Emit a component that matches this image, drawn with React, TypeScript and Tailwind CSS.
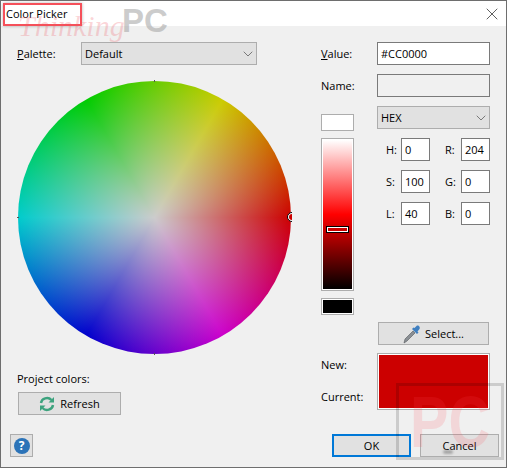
import { X, ChevronDown } from "lucide-react";

const font = "font-['Open_Sans','Liberation_Sans',sans-serif]";

function Select({ value }: { value: string }) {
  return (
    <div className="flex h-[23px] items-center justify-between border border-[#adadad] bg-[#e1e1e1] pl-[3px]">
      <span>{value}</span>
      <ChevronDown size={16} strokeWidth={1} className="text-[#444]" />
    </div>
  );
}

function Field({ label, value }: { label: string; value: string }) {
  return (
    <>
      <span>{label}</span>
      <div className="flex h-[23px] items-center border border-[#7a7a7a] bg-white pl-[3px]">{value}</div>
    </>
  );
}

function Dropper() {
  return (
    <svg width="18" height="20" viewBox="0 0 18 20">
      <path d="M1 19 L2 15 L10 7 L12 9 L4 17 Z" fill="#8a8f94" stroke="#55595c" strokeWidth="0.6" />
      <path d="M9 5 L14 10 L15.5 8.5 L14.5 7.5 L16.5 5 C17.5 3.5 16 1 14 1.5 L11.5 4 L10.5 3.5 Z" fill="#3f7fc0" />
    </svg>
  );
}

function Refresh() {
  return (
    <svg width="16" height="16" viewBox="0 0 16 16" fill="none" stroke="#3da37e" strokeWidth="2.4">
      <path d="M2 7 A6 5.5 0 0 1 12.5 4" />
      <path d="M14 9 A6 5.5 0 0 1 3.5 12" />
      <path d="M15 1 V6.5 H9.5 Z" fill="#3da37e" stroke="none" />
      <path d="M1 15 V9.5 H6.5 Z" fill="#3da37e" stroke="none" />
    </svg>
  );
}

export default function App() {
  return (
    <div className={`${font} relative flex h-[468px] w-[507px] flex-col overflow-hidden border border-[#6e6e6e] bg-[#f0f0f0] text-[11px] leading-4 text-black`}>
      {/* Title bar */}
      <div className="flex h-[25px] shrink-0 items-center justify-between bg-white pl-[5px] pr-[4px]">
        <span>Color Picker</span>
        <X size={20} strokeWidth={0.75} />
      </div>

      <div className="flex flex-1 pl-[16px] pt-[16px]">
        {/* Left column */}
        <div className="flex w-[304px] shrink-0 flex-col items-start">
          <div className="flex w-[240px] items-center">
            <span className="w-[64px] shrink-0"><span className="underline">P</span>alette:</span>
            <div className="flex-1"><Select value="Default" /></div>
          </div>

          <div className="relative ml-px mt-[16px] size-[273px] rounded-full bg-[image:radial-gradient(circle_closest-side,#cccccc,#cccccc00),conic-gradient(from_90deg,#cc0000,#cc00cc,#0000cc,#00cccc,#00cc00,#cccc00,#cc0000)]">
            <div className="absolute left-[136px] top-[-1px] h-[2px] w-px bg-[#555]" />
            <div className="absolute bottom-[-1px] left-[136px] h-[2px] w-px bg-[#555]" />
            <div className="absolute left-[-1px] top-[136px] h-px w-[2px] bg-[#555]" />
            <div className="absolute right-[-1px] top-[131px] h-[10px] w-[5px] overflow-hidden">
              <div className="size-[10px] rounded-full border border-black bg-white p-px">
                <div className="size-full rounded-full bg-[#cc0000]" />
              </div>
            </div>
          </div>

          <div className="mt-[17px]">Project colors:</div>
          <div className="ml-px mt-[5px] flex h-[23px] w-[103px] items-center justify-center gap-[5px] border border-[#adadad] bg-[#e1e1e1]">
            <Refresh />
            <span>Refresh</span>
          </div>
          <div className="ml-[-7px] mt-[19px] flex size-[23px] items-center justify-center border border-[#adadad] bg-[#e1e1e1]">
            <div className="flex size-[16px] items-center justify-center rounded-full bg-[#2b73b8] text-[12px] font-bold text-white">?</div>
          </div>
        </div>

        {/* Right column */}
        <div className="flex w-[178px] shrink-0 flex-col items-start">
          <div className="flex w-[169px] items-center">
            <span className="w-[56px] shrink-0"><span className="underline">V</span>alue:</span>
            <div className="flex h-[23px] flex-1 items-center border border-[#7a7a7a] bg-white pl-[3px]">#CC0000</div>
          </div>
          <div className="mt-[9px] flex w-[169px] items-center">
            <span className="w-[56px] shrink-0">Name:</span>
            <div className="h-[23px] flex-1 border border-[#7a7a7a] bg-[#f0f0f0]" />
          </div>

          <div className="mt-[9px] flex w-[169px]">
            <div className="flex w-[33px] shrink-0 flex-col pt-[8px]">
              <div className="h-[17px] border border-[#adadad] bg-white" />
              <div className="relative mt-[7px] h-[153px] border border-[#adadad] bg-white p-px">
                <div className="h-full bg-[linear-gradient(to_bottom,#ffffff,#ff0000_50%,#000000)]" />
                <div className="absolute left-[4px] top-[87px] h-[7px] w-[23px] border border-black bg-[#cc0000] outline outline-1 -outline-offset-2 outline-white" />
              </div>
              <div className="mt-[7px] h-[17px] border border-[#adadad] bg-white p-px">
                <div className="size-full bg-black" />
              </div>
            </div>
            <div className="ml-[23px] flex-1">
              <Select value="HEX" />
              <div className="mt-[9px] grid grid-cols-[15px_29px_31px_29px] items-center gap-y-[9px] pl-[9px]">
                <Field label="H:" value="0" />
                <div className="contents">
                  <span className="pl-[15px]">R:</span>
                  <div className="flex h-[23px] items-center border border-[#7a7a7a] bg-white pl-[3px]">204</div>
                </div>
                <Field label="S:" value="100" />
                <div className="contents">
                  <span className="pl-[15px]">G:</span>
                  <div className="flex h-[23px] items-center border border-[#7a7a7a] bg-white pl-[3px]">0</div>
                </div>
                <Field label="L:" value="40" />
                <div className="contents">
                  <span className="pl-[15px]">B:</span>
                  <div className="flex h-[23px] items-center border border-[#7a7a7a] bg-white pl-[3px]">0</div>
                </div>
              </div>
            </div>
          </div>

          <div className="ml-[57px] mt-[7px] flex h-[23px] w-[111px] items-center justify-center gap-[4px] border border-[#adadad] bg-[#e1e1e1]">
            <Dropper />
            <span>Select...</span>
          </div>

          <div className="mt-[8px] flex w-[169px]">
            <div className="flex w-[56px] shrink-0 flex-col gap-[16px] pt-[4px]">
              <span>New:</span>
              <span>Current:</span>
            </div>
            <div className="h-[57px] flex-1 border border-[#adadad] bg-white p-px">
              <div className="size-full bg-[#cc0000]" />
            </div>
          </div>

          <div className="ml-[11px] mt-[24px] flex gap-[9px]">
            <div className="flex h-[23px] w-[79px] items-center justify-center border-2 border-[#0078d7] bg-[#e1e1e1]">OK</div>
            <div className="flex h-[23px] w-[79px] items-center justify-center border border-[#adadad] bg-[#e1e1e1]">Cancel</div>
          </div>
        </div>
      </div>

      {/* Watermarks and screenshot annotation */}
      <div className="pointer-events-none absolute left-[2px] top-[2px] h-[23px] w-[79px] border-[2.5px] border-[#f5505a] shadow-[0_0_3px_rgba(0,0,0,0.3)]" />
      <span className="pointer-events-none absolute left-[17px] top-[8px] font-['Liberation_Serif',serif] text-[30px] italic leading-[34px] text-[#ef5a64]/25">Thinking</span>
      <span className="pointer-events-none absolute left-[121px] top-[0px] font-['Liberation_Sans',sans-serif] text-[33px] font-bold leading-[40px] text-[#9a9a9a]/50">PC</span>
      <div className="pointer-events-none absolute left-[395px] top-[382px] flex h-[77px] w-[108px] items-center justify-center border-[3.5px] border-black/15">
        <span className="scale-x-[0.8] font-['Liberation_Sans',sans-serif] text-[72px] font-bold leading-[72px] text-[#ff4050]/15">PC</span>
      </div>
      <div className="pointer-events-none absolute left-[442px] top-[449px] h-[4px] w-[10px] rounded-full bg-[#808080]/60 blur-[1px]" />
    </div>
  );
}
